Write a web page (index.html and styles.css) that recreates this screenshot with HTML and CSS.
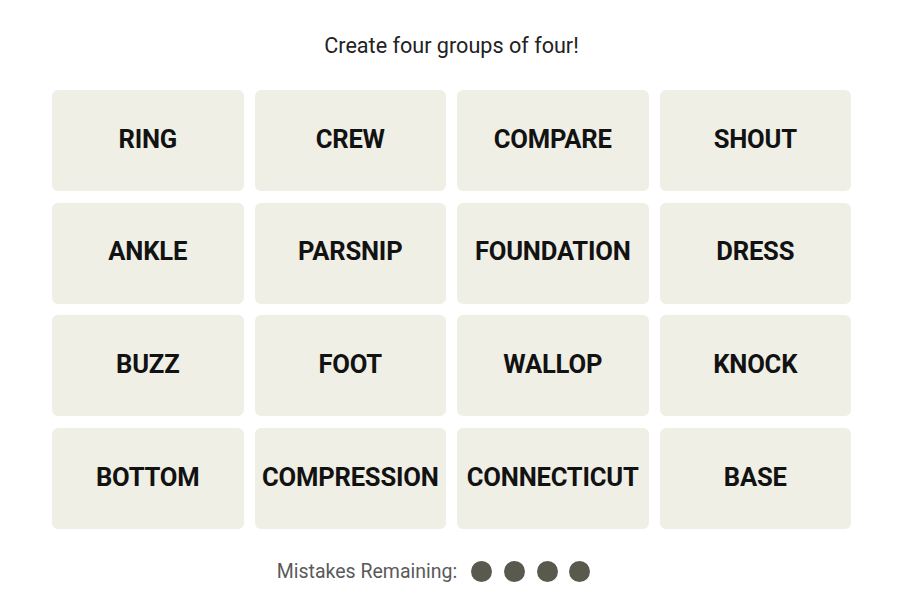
FILE: index.html
```html
<!DOCTYPE html>
<html>
<head>
<meta charset="utf-8">
<link rel="stylesheet" href="styles.css">
</head>
<body>
<main class="game">
  <p class="prompt">Create four groups of four!</p>
  <div class="board">
    <div class="tile">RING</div>
    <div class="tile">CREW</div>
    <div class="tile">COMPARE</div>
    <div class="tile">SHOUT</div>
    <div class="tile">ANKLE</div>
    <div class="tile">PARSNIP</div>
    <div class="tile">FOUNDATION</div>
    <div class="tile">DRESS</div>
    <div class="tile">BUZZ</div>
    <div class="tile">FOOT</div>
    <div class="tile">WALLOP</div>
    <div class="tile">KNOCK</div>
    <div class="tile">BOTTOM</div>
    <div class="tile">COMPRESSION</div>
    <div class="tile">CONNECTICUT</div>
    <div class="tile">BASE</div>
  </div>
  <div class="mistakes">
    <span class="mistakes-label">Mistakes Remaining:</span>
    <span class="dots">
      <span class="dot"></span><span class="dot"></span><span class="dot"></span><span class="dot"></span>
    </span>
  </div>
</main>
</body>
</html>
```
FILE: styles.css
```css
html, body {
  margin: 0;
  padding: 0;
  background: #ffffff;
}
body {
  font-family: Roboto, "Liberation Sans", sans-serif;
  color: #121212;
}
.game {
  width: 799px;
  margin: 0 auto;
  padding-top: 32px;
  padding-right: 2px;
}
.prompt {
  margin: 0;
  text-align: center;
  font-size: 21.6px;
  line-height: 28px;
  color: #222;
}
.board {
  margin-top: 30px;
  display: grid;
  grid-template-columns: repeat(4, 1fr);
  grid-auto-rows: 101px;
  column-gap: 11px;
  row-gap: 11.7px;
}
.tile {
  background: #efefe6;
  border-radius: 6px;
  display: flex;
  align-items: center;
  justify-content: center;
  padding-bottom: 4px;
  font-weight: 700;
  font-size: 25.6px;
  letter-spacing: -0.2px;
  color: #121212;
}
.mistakes {
  margin-top: 31px;
  display: flex;
  justify-content: center;
  align-items: center;
  gap: 14px;
  padding-right: 36px;
}
.mistakes-label {
  font-size: 19.5px;
  color: #5a5a5a;
}
.dots {
  display: flex;
  gap: 11.7px;
}
.dot {
  width: 21px;
  height: 21px;
  border-radius: 50%;
  background: #5a594e;
}
```
